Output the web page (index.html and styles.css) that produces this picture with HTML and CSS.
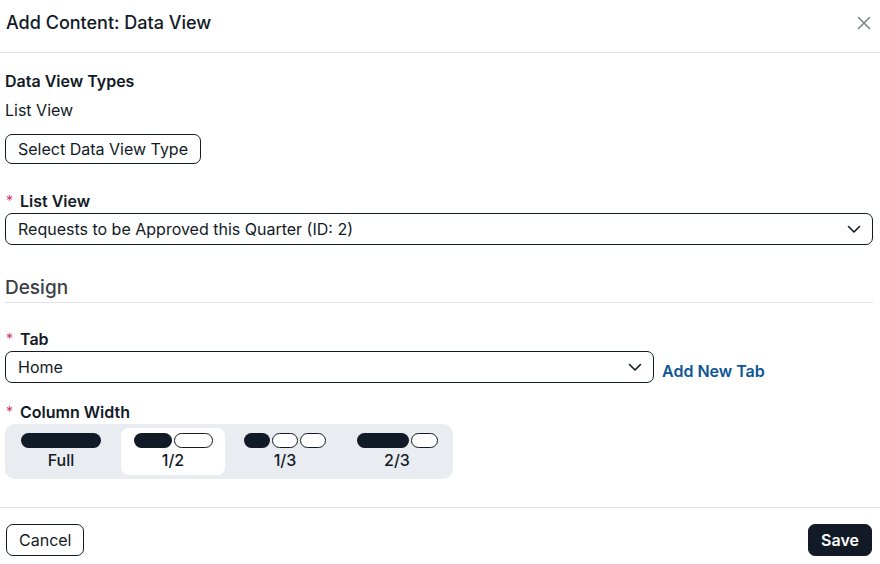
FILE: index.html
```html
<!DOCTYPE html>
<html lang="en">
<head>
<meta charset="utf-8">
<title>Add Content: Data View</title>
<link rel="stylesheet" href="styles.css">
</head>
<body>
<div class="dialog">
  <header class="dlg-header">
    <h1 class="dlg-title">Add Content: Data View</h1>
    <button class="close-btn" aria-label="Close">
      <svg width="14" height="14" viewBox="0 0 14 14"><path d="M1.5 1.5 L12.5 12.5 M12.5 1.5 L1.5 12.5" stroke="#7a818b" stroke-width="1.5" fill="none" stroke-linecap="round"/></svg>
    </button>
  </header>
  <main class="dlg-body">
    <div class="types-title">Data View Types</div>
    <div class="types-value">List View</div>
    <button class="btn btn-outline select-type">Select Data View Type</button>

    <div class="field-label list-label"><span class="req">*</span>List View</div>
    <div class="select full">
      <span>Requests to be Approved this Quarter (ID: 2)</span>
      <svg class="chev" width="14" height="9" viewBox="0 0 14 9"><path d="M1.5 1.5 L7 7 L12.5 1.5" stroke="#111a26" stroke-width="1.6" fill="none" stroke-linecap="round" stroke-linejoin="round"/></svg>
    </div>

    <h2 class="section-title">Design</h2>

    <div class="field-label tab-label"><span class="req">*</span>Tab</div>
    <div class="tab-row">
      <div class="select tab-select">
        <span>Home</span>
        <svg class="chev" width="14" height="9" viewBox="0 0 14 9"><path d="M1.5 1.5 L7 7 L12.5 1.5" stroke="#111a26" stroke-width="1.6" fill="none" stroke-linecap="round" stroke-linejoin="round"/></svg>
      </div>
      <a class="add-tab" href="#">Add New Tab</a>
    </div>

    <div class="field-label col-label"><span class="req">*</span>Column Width</div>
    <div class="segmented">
      <div class="seg-opt">
        <div class="bars"><span class="bar dark" style="width:80px"></span></div>
        <div class="seg-text">Full</div>
      </div>
      <div class="seg-opt active">
        <div class="bars"><span class="bar dark" style="width:38px"></span><span class="bar light" style="width:39px"></span></div>
        <div class="seg-text">1/2</div>
      </div>
      <div class="seg-opt">
        <div class="bars"><span class="bar dark" style="width:26px"></span><span class="bar light" style="width:26px"></span><span class="bar light" style="width:26px"></span></div>
        <div class="seg-text">1/3</div>
      </div>
      <div class="seg-opt">
        <div class="bars"><span class="bar dark" style="width:52px"></span><span class="bar light" style="width:27px"></span></div>
        <div class="seg-text">2/3</div>
      </div>
    </div>
  </main>
  <footer class="dlg-footer">
    <button class="btn btn-outline">Cancel</button>
    <button class="btn btn-dark">Save</button>
  </footer>
</div>
</body>
</html>
```
FILE: styles.css
```css
* { box-sizing: border-box; }
html, body { margin: 0; padding: 0; background: #fff; }
body {
  font-family: Inter, "Noto Sans", sans-serif;
  color: #111a26;
  font-size: 16px;
  width: 880px;
  height: 564px;
  overflow: hidden;
}
.dialog { display: flex; flex-direction: column; }
.dlg-header {
  height: 53px;
  border-bottom: 1px solid #e1e3e6;
  display: flex;
  justify-content: space-between;
  align-items: flex-start;
  padding: 11px 9px 0 6px;
}
.dlg-title {
  margin: 0;
  font-size: 18px;
  font-weight: 500;
  line-height: 24px;
  color: #111a26;
}
.close-btn {
  border: 0;
  background: none;
  padding: 0;
  margin-top: 5px;
  width: 14px;
  height: 14px;
  display: flex;
}
.dlg-body {
  padding: 18px 7px 0 5px;
  display: flex;
  flex-direction: column;
  align-items: flex-start;
  height: 455px;
  border-bottom: 1px solid #e1e3e6;
}
.types-title { font-weight: 600; line-height: 20px; }
.types-value { line-height: 20px; margin-top: 9px; }
.btn {
  font-family: inherit;
  font-size: 16px;
  height: 32px;
  border-radius: 7px;
  padding: 0 12px;
  line-height: 30px;
  cursor: pointer;
}
.btn-outline { background: #fff; color: #111a26; border: 1px solid #111a26; }
.btn-dark { background: #111a26; color: #fff; border: 1px solid #111a26; font-weight: 600; }
.select-type { margin-top: 14px; height: 30px; line-height: 28px; }
.field-label {
  font-weight: 600;
  line-height: 20px;
  display: flex;
  gap: 7px;
  padding-left: 1px;
}
.req { color: #d6336c; font-weight: 400; font-size: 14px; }
.list-label { margin-top: 27px; }
.select {
  margin-top: 2px;
  height: 32px;
  border: 1px solid #111a26;
  border-radius: 7px;
  display: flex;
  align-items: center;
  justify-content: space-between;
  padding: 0 11px 0 12px;
  background: #fff;
}
.select.full { width: 100%; }
.section-title {
  margin: 31px 0 0 0;
  width: 100%;
  font-size: 19px;
  font-weight: 500;
  line-height: 24px;
  color: #3b3f45;
  padding-bottom: 2px;
  border-bottom: 1px solid #e1e3e6;
}
.tab-label { margin-top: 26px; }
.tab-row { display: flex; align-items: flex-end; gap: 8px; margin-top: 2px; }
.tab-select { width: 649px; margin-top: 0; }
.add-tab {
  color: #0d5696;
  font-weight: 600;
  text-decoration: none;
  line-height: 20px;
  margin-bottom: 2px;
}
.col-label { margin-top: 19px; }
.segmented {
  margin-top: 2px;
  background: #e9ecf0;
  border-radius: 10px;
  padding: 4px;
  display: flex;
  gap: 8px;
  width: 448px;
  height: 55px;
}
.seg-opt {
  width: 104px;
  border-radius: 8px;
  display: flex;
  flex-direction: column;
  align-items: center;
  padding-top: 5px;
}
.seg-opt.active { background: #fff; }
.bars { display: flex; gap: 2px; height: 15px; }
.bar { display: block; height: 15px; border-radius: 8px; }
.bar.dark { background: #111a26; }
.bar.light { background: #fff; border: 1px solid #111a26; }
.seg-text { font-weight: 500; line-height: 20px; margin-top: 2px; }
.dlg-footer {
  display: flex;
  justify-content: space-between;
  padding: 16px 8px 0 6px;
}
```
